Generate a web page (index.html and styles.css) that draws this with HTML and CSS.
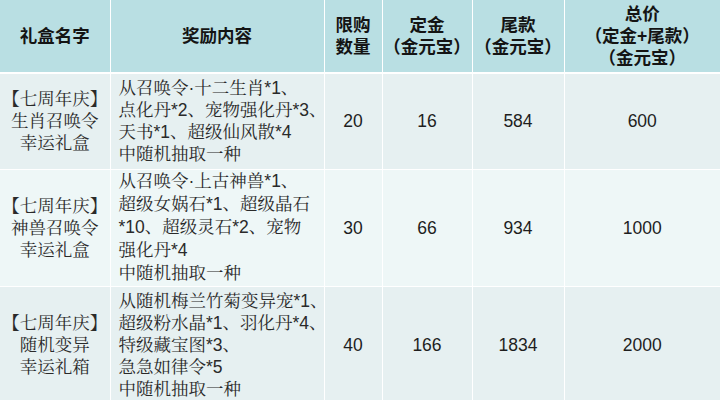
FILE: index.html
```html
<!DOCTYPE html>
<html lang="zh">
<head>
<meta charset="utf-8">
<link rel="stylesheet" href="styles.css">
</head>
<body>
<table class="gift-table">
  <colgroup>
    <col class="c-name">
    <col class="c-desc">
    <col class="c-limit">
    <col class="c-dep">
    <col class="c-rest">
    <col class="c-total">
  </colgroup>
  <thead>
    <tr class="head-row">
      <th>礼盒名字</th>
      <th>奖励内容</th>
      <th>限购<br>数量</th>
      <th>定金<br>（金元宝）</th>
      <th>尾款<br>（金元宝）</th>
      <th>总价<br>（定金+尾款）<br>（金元宝）</th>
    </tr>
  </thead>
  <tbody>
    <tr class="row row-a row-1">
      <td class="name">【七周年庆】<br>生肖召唤令<br>幸运礼盒</td>
      <td class="desc">从召唤令·十二生肖*1、<br>点化丹*2、宠物强化丹*3、<br>天书*1、超级仙风散*4<br>中随机抽取一种</td>
      <td class="num">20</td>
      <td class="num">16</td>
      <td class="num">584</td>
      <td class="num">600</td>
    </tr>
    <tr class="row row-b row-2">
      <td class="name">【七周年庆】<br>神兽召唤令<br>幸运礼盒</td>
      <td class="desc">从召唤令·上古神兽*1、<br>超级女娲石*1、超级晶石<br>*10、超级灵石*2、宠物<br>强化丹*4<br>中随机抽取一种</td>
      <td class="num">30</td>
      <td class="num">66</td>
      <td class="num">934</td>
      <td class="num">1000</td>
    </tr>
    <tr class="row row-a row-3">
      <td class="name">【七周年庆】<br>随机变异<br>幸运礼箱</td>
      <td class="desc">从随机梅兰竹菊变异宠*1、<br>超级粉水晶*1、羽化丹*4、<br>特级藏宝图*3、<br>急急如律令*5<br>中随机抽取一种</td>
      <td class="num">40</td>
      <td class="num">166</td>
      <td class="num">1834</td>
      <td class="num">2000</td>
    </tr>
  </tbody>
</table>
</body>
</html>
```

FILE: styles.css
```css
html, body {
  margin: 0;
  padding: 0;
  background: #ffffff;
  overflow: hidden;
}

.gift-table {
  width: 720px;
  table-layout: fixed;
  border-collapse: collapse;
  font-family: "Liberation Sans", "Noto Serif CJK SC", "Noto Sans CJK SC", sans-serif;
  color: #222222;
}

.c-name { width: 110px; }
.c-desc { width: 214px; }
.c-limit { width: 58px; }
.c-dep { width: 90px; }
.c-rest { width: 92px; }
.c-total { width: 156px; }

.gift-table th,
.gift-table td {
  border: 1.5px solid #ffffff;
  padding: 0;
}

.gift-table tr:first-child th { border-top: none; }
.gift-table th:first-child,
.gift-table td:first-child { border-left: none; }
.gift-table th:last-child,
.gift-table td:last-child { border-right: none; }

.head-row {
  height: 73px;
  background: #b9dfe3;
}

.head-row th {
  font-family: "Liberation Sans", "Noto Sans CJK SC", sans-serif;
  font-weight: 700;
  font-size: 17.5px;
  line-height: 22px;
  color: #141414;
  text-align: center;
  vertical-align: middle;
  border-bottom: 2px solid #ffffff;
}

.row-a { background: #e6f0f1; }
.row-b { background: #eef7f7; }

.row-1 { height: 96px; }
.row-2 { height: 117px; }
.row-3 { height: 118px; }

.row td {
  font-size: 17.5px;
  line-height: 22px;
  vertical-align: middle;
}

.name {
  text-align: center;
  color: #2a2a2a;
}

.desc {
  text-align: left;
  padding-left: 8px !important;
  white-space: nowrap;
  color: #2a2a2a;
}

.row-2 .desc { line-height: 23px; }

.num {
  text-align: center;
  font-size: 17px;
  color: #1e1e1e;
}
```
